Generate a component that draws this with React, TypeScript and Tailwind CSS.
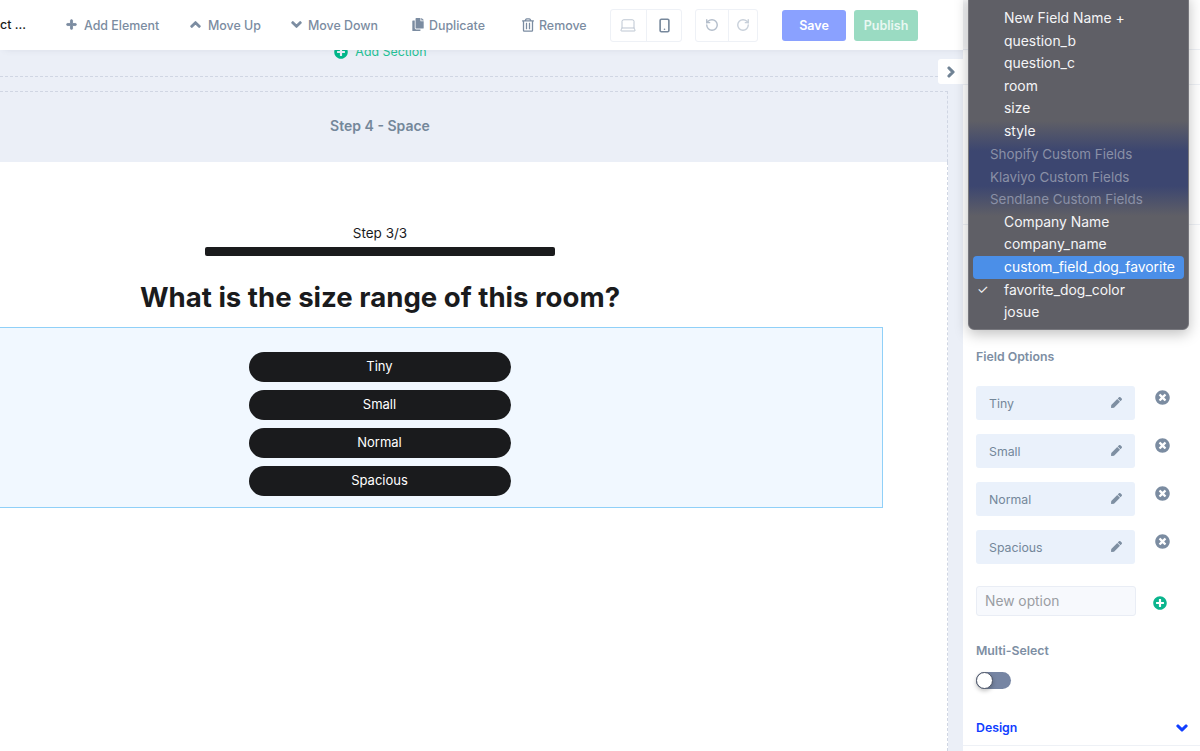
import React from 'react';
import { FaChevronDown, FaChevronRight, FaChevronUp, FaCopy, FaPen, FaPlus, FaPlusCircle, FaRegTrashAlt, FaTimesCircle } from 'react-icons/fa';
import { Laptop, RotateCcw, RotateCw, Smartphone } from 'lucide-react';

const sans = "font-['Inter','Liberation_Sans',sans-serif]";

const answers = ['Tiny', 'Small', 'Normal', 'Spacious'];

type MenuItem = { label: string; kind?: 'group' | 'active' | 'checked' };

const menu: MenuItem[] = [
  { label: 'New Field Name +' },
  { label: 'question_b' },
  { label: 'question_c' },
  { label: 'room' },
  { label: 'size' },
  { label: 'style' },
  { label: 'Shopify Custom Fields', kind: 'group' },
  { label: 'Klaviyo Custom Fields', kind: 'group' },
  { label: 'Sendlane Custom Fields', kind: 'group' },
  { label: 'Company Name' },
  { label: 'company_name' },
  { label: 'custom_field_dog_favorite', kind: 'active' },
  { label: 'favorite_dog_color', kind: 'checked' },
  { label: 'josue' },
];

function ToolbarItem({ icon, label, className }: { icon: React.ReactNode; label: string; className: string }) {
  return (
    <div className={`flex items-center text-[12.4px] font-medium text-[#7b8ca1] ${className}`}>
      {icon}
      <span className="pt-[2px]">{label}</span>
    </div>
  );
}

function Toolbar() {
  return (
    <div className="relative z-10 flex h-[50px] shrink-0 items-center bg-white shadow-[4px_0_6px_rgba(90,100,120,0.12)]">
      <span className="w-[66px] shrink-0 text-[12.4px] font-medium text-[#1b1c20]">ct ...</span>
      <ToolbarItem icon={<FaPlus className="h-[11px] w-[11px]" stroke="currentColor" strokeWidth={40} />} label="Add Element" className="w-[124px] gap-[7px]" />
      <ToolbarItem icon={<FaChevronUp className="h-[11px] w-[11px]" stroke="currentColor" strokeWidth={50} />} label="Move Up" className="w-[101px] gap-[7px]" />
      <ToolbarItem icon={<FaChevronDown className="h-[11px] w-[11px]" stroke="currentColor" strokeWidth={50} />} label="Move Down" className="w-[121px] gap-[6px]" />
      <ToolbarItem icon={<FaCopy className="h-[13px] w-[12px]" />} label="Duplicate" className="w-[110px] gap-[5px]" />
      <ToolbarItem icon={<FaRegTrashAlt className="h-[14px] w-[12px]" />} label="Remove" className="w-[88px] gap-[5px]" />
      <div className="flex h-[33px] w-[72px] rounded-[3px] border border-[#eef1f6]">
        <div className="flex w-[36px] items-center justify-center border-r border-[#eef1f6] pr-[2px]">
          <Laptop className="h-[18px] w-[18px] text-[#b6c0cd]" strokeWidth={1.2} />
        </div>
        <div className="flex flex-1 items-center justify-center">
          <Smartphone className="h-[15px] w-[15px] text-[#77889c]" strokeWidth={2.6} />
        </div>
      </div>
      <div className="ml-[13px] flex h-[33px] w-[63px] rounded-[3px] border border-[#eef1f6]">
        <div className="flex w-[33px] items-center justify-center border-r border-[#eef1f6]">
          <RotateCcw className="h-[14px] w-[14px] text-[#b4becb]" strokeWidth={2.4} />
        </div>
        <div className="flex flex-1 items-center justify-center">
          <RotateCw className="h-[14px] w-[14px] text-[#c8d0da]" strokeWidth={2.4} />
        </div>
      </div>
      <div className="ml-[24px] flex h-[31px] w-[64px] items-center justify-center rounded-[3px] bg-[#8aa1ff] pt-[2px] text-[12.5px] font-semibold text-white">Save</div>
      <div className="ml-[8px] flex h-[31px] w-[64px] items-center justify-center rounded-[3px] bg-[#9adbc2] pt-[2px] text-[12.5px] font-semibold text-[#e9f8f2]">Publish</div>
    </div>
  );
}

function Canvas() {
  return (
    <div className="relative flex min-h-0 flex-1 overflow-hidden bg-[#ebeff7]">
      <div className="flex w-[948px] shrink-0 flex-col overflow-hidden">
        <div className="h-[27px] shrink-0 border-b border-dashed border-[#d0d6e3] bg-[#ebeff7]">
          <div className="-mt-[7px] flex w-[761px] items-center justify-center gap-[7px] text-[12.4px] text-[#1fc295]">
            <FaPlusCircle className="h-[14px] w-[14px] text-[#00b78a]" />
            <span>Add Section</span>
          </div>
        </div>
        <div className="h-[14px] shrink-0" />
        <div className="h-[71px] shrink-0 border-t border-r border-dashed border-[#d0d6e3] bg-[#ebeff7]">
          <div className="flex h-full w-[760px] items-center justify-center pb-[3px] text-[14px] font-semibold text-[#74879a]">Step 4 - Space</div>
        </div>
        <div className="flex-1 border-r border-dashed border-[#d0d6e3] bg-white">
          <div className="flex w-[760px] flex-col items-center pt-[63px] text-[#1a1b1d]">
            <div className="text-[13.5px] leading-[17px]">Step 3/3</div>
            <div className="mt-[5px] h-[9px] w-[350px] rounded-[2px] bg-[#1a1b1d]" />
            <h1 className="mt-[25px] text-[27.6px] font-bold leading-[32px]">What is the size range of this room?</h1>
          </div>
          <div className="-ml-[122px] mt-[14px] flex h-[181px] w-[1005px] flex-col items-center gap-[8px] border border-[#90d0f8] bg-[#f1f8ff] pr-[2px] pt-[24px]">
            {answers.map((answer) => (
              <div key={answer} className="flex h-[30px] w-[262px] items-center justify-center rounded-full bg-[#1a1b1d] text-[13px] text-white">
                {answer}
              </div>
            ))}
          </div>
        </div>
      </div>
      <div className="absolute left-[938px] top-[9px] flex h-[25px] w-[25px] items-center justify-center rounded-l-[3px] bg-white pl-[1px] text-[#6e8193]">
        <FaChevronRight className="h-[12px] w-[12px]" stroke="currentColor" strokeWidth={50} />
      </div>
    </div>
  );
}

function OptionRow({ label }: { label: string }) {
  return (
    <div className="flex h-[34px] items-start">
      <div className="flex h-[34px] w-[159px] items-center justify-between rounded-[3px] bg-[#eaf1fb] pl-[13px] pr-[13px] text-[12.3px] text-[#74879a]">
        <span className="pt-[2px]">{label}</span>
        <FaPen className="mb-[2px] h-[11px] w-[11px] text-[#7e8fa2]" />
      </div>
      <FaTimesCircle className="ml-[20px] mt-[4px] h-[15px] w-[15px] text-[#7b8ca1]" />
    </div>
  );
}

function SidePanel() {
  return (
    <div className="flex w-[237px] shrink-0 flex-col bg-white pl-[13px]">
      <div className="-ml-[13px] h-[50px] shrink-0 border-b border-[#eef1f6]" />
      <div className="-ml-[13px] h-[35px] shrink-0 border-b border-[#eef1f6]" />
      <div className="-ml-[13px] h-[140px] shrink-0 border-b border-[#eef1f6]" />
      <div className="mt-[124px] text-[12.3px] font-semibold leading-[16px] text-[#7d8ea3]">Field Options</div>
      <div className="mt-[21px] flex flex-col gap-[14px]">
        {answers.map((answer) => (
          <OptionRow key={answer} label={answer} />
        ))}
      </div>
      <div className="mt-[22px] flex items-center">
        <div className="flex h-[30px] w-[160px] items-center rounded-[3px] border border-[#e9edf5] bg-[#f7f9fd] pl-[8px] text-[13.8px] text-[#9a9da3]">New option</div>
        <FaPlusCircle className="ml-[17px] mt-[4px] h-[14px] w-[14px] text-[#0bb58e]" />
      </div>
      <div className="mt-[27px] text-[12.3px] font-semibold leading-[16px] text-[#7d8ea3]">Multi-Select</div>
      <div className="mt-[13px] flex h-[17px] w-[35px] items-center rounded-full bg-[#7685a3]">
        <div className="h-[17px] w-[17px] rounded-full border border-[#4e5668] bg-white shadow-[0_2px_4px_rgba(0,0,0,0.25)]" />
      </div>
      <div className="mt-[31px] flex items-center justify-between pr-[12px] text-[#0f3dff]">
        <span className="text-[12.3px] font-semibold leading-[16px]">Design</span>
        <FaChevronDown className="h-[12px] w-[12px]" stroke="currentColor" strokeWidth={50} />
      </div>
      <div className="-ml-[13px] mt-[9px] border-b border-[#eef1f6]" />
    </div>
  );
}

function FieldMenu() {
  return (
    <div className="absolute left-[968px] top-[-6px] z-20 flex w-[221px] flex-col rounded-b-[6px] border border-[#77777d] bg-[linear-gradient(180deg,#5f5f66_0px,#5f5f66_126px,#3c4670_156px,#3c4670_191px,#5f5f66_221px,#5f5f66_100%)] px-[4px] pb-[5px] pt-[12px] text-[13.9px] shadow-[0_4px_14px_rgba(0,0,0,0.25)]">
      {menu.map((item) => (
        <div
          key={item.label}
          className={`relative flex h-[22.65px] items-center rounded-[4px] ${item.kind === 'group' ? 'pl-[17px] text-[13.4px] text-[#8a90a6]' : 'pl-[31px] text-[#f4f4f6]'} ${item.kind === 'active' ? 'bg-[#4b8fe8] text-white' : ''}`}
        >
          {item.kind === 'checked' && <span className="absolute left-[4px] text-[13px]">✓</span>}
          {item.label}
        </div>
      ))}
    </div>
  );
}

export default function App() {
  return (
    <div className={`relative flex h-[751px] w-[1200px] overflow-hidden bg-white ${sans}`}>
      <div className="flex w-[963px] shrink-0 flex-col">
        <Toolbar />
        <Canvas />
      </div>
      <SidePanel />
      <FieldMenu />
    </div>
  );
}
